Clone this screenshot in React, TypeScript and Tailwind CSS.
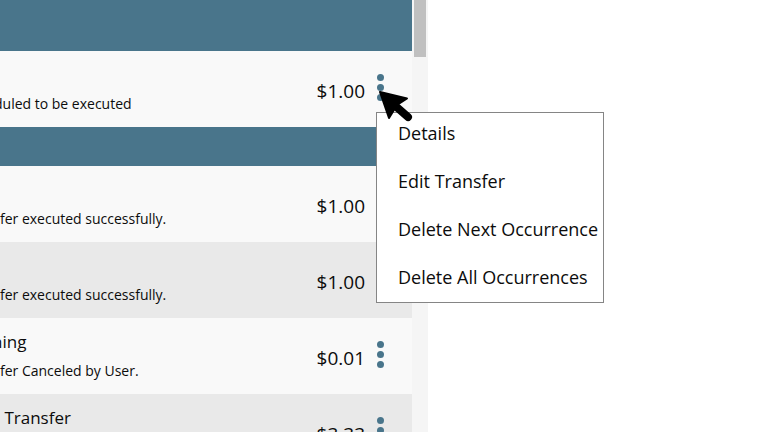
const menuItems = ['Details', 'Edit Transfer', 'Delete Next Occurrence', 'Delete All Occurrences'];

interface Transfer {
  title?: string;
  status: string;
  amount: string;
  shaded?: boolean;
  clipped?: boolean;
  menuOpen?: boolean;
}

const upcoming: Transfer[] = [
  { status: 'duled to be executed', amount: '$1.00', clipped: true, menuOpen: true },
];

const history: Transfer[] = [
  { status: 'fer executed successfully.', amount: '$1.00' },
  { status: 'fer executed successfully.', amount: '$1.00', shaded: true },
  { title: 'ning', status: 'fer Canceled by User.', amount: '$0.01', clipped: true },
  { title: ' Transfer', status: '', amount: '$3.33', shaded: true },
];

function PointerIcon() {
  return (
    <svg
      className="pointer-events-none absolute top-[39px] left-px h-8 w-9"
      viewBox="0 0 36 32"
      aria-hidden="true"
    >
      <path
        d="M2 2 L29 8.5 L19 15 L11 28 Z"
        fill="#000"
        stroke="#000"
        strokeWidth="2"
        strokeLinejoin="round"
      />
      <path d="M14 13 L30 27" stroke="#000" strokeWidth="8" strokeLinecap="round" />
    </svg>
  );
}

function ActionsMenu() {
  return (
    <ul
      role="menu"
      className="absolute top-[61px] -left-px flex w-[228px] flex-col gap-6 border border-[#858585] bg-white pt-2 pb-[13px] pl-[21px]"
    >
      {menuItems.map((item) => (
        <li key={item} role="none" className="flex h-6 items-center">
          <button role="menuitem" className="text-lg leading-6 whitespace-nowrap">
            {item}
          </button>
        </li>
      ))}
    </ul>
  );
}

function TransferRow({ title, status, amount, shaded, clipped, menuOpen }: Transfer) {
  return (
    <li className={`flex h-[76px] items-start pr-7 ${shaded ? 'bg-[#e9e9e9]' : 'bg-[#f9f9f9]'}`}>
      <div className="min-w-0 flex-1 pt-3 whitespace-pre">
        <p className={`h-7 text-[17px] leading-6 ${clipped ? '-ml-2' : ''}`}>{title}</p>
        <p className={`text-sm leading-[26px] ${clipped && !title ? '-ml-1.5' : ''}`}>{status}</p>
      </div>
      <span className="pt-7 text-[19px] leading-6">{amount}</span>
      <div className={`relative ml-3 w-[7px] ${menuOpen ? 'z-10' : ''}`}>
        <button aria-label="Transfer actions" className="flex w-[7px] flex-col gap-[3px] pt-[23px]">
          <span className="size-[7px] rounded-full bg-[#49758b]" />
          <span className="size-[7px] rounded-full bg-[#49758b]" />
          <span className="size-[7px] rounded-full bg-[#49758b]" />
        </button>
        {menuOpen && <ActionsMenu />}
        {menuOpen && <PointerIcon />}
      </div>
    </li>
  );
}

function App() {
  return (
    <main className="grid h-screen grid-cols-[107fr_85fr] overflow-hidden bg-white font-['Open_Sans',sans-serif] text-[#0c0c0c]">
      <section className="flex min-w-0">
        <div className="min-w-0 flex-1">
          <div className="h-[51px] bg-[#49758b]" />
          <ul>
            {upcoming.map((transfer, i) => (
              <TransferRow key={i} {...transfer} />
            ))}
          </ul>
          <div className="h-[39px] bg-[#49758b]" />
          <ul>
            {history.map((transfer, i) => (
              <TransferRow key={i} {...transfer} />
            ))}
          </ul>
        </div>
        <div className="w-4 bg-[#f5f5f5] px-[2px]">
          <div className="h-[57px] bg-[#c0c0c0]" />
        </div>
      </section>
    </main>
  );
}

export default App;
